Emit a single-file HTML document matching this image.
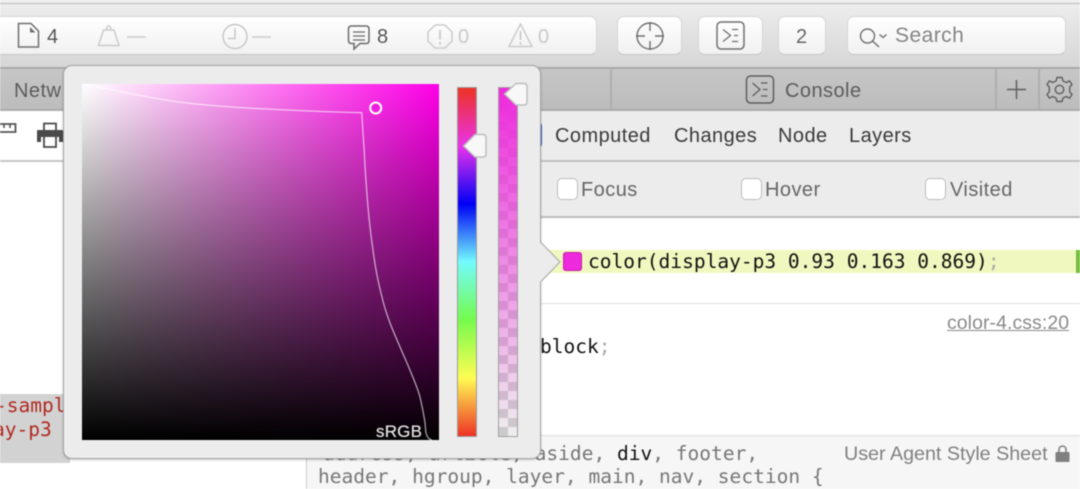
<!DOCTYPE html>
<html><head><meta charset="utf-8">
<style>
html,body{margin:0;padding:0;width:1080px;height:489px;overflow:hidden;background:#fff}
*{box-sizing:border-box}
#r{position:relative;width:1080px;height:489px;overflow:hidden;font-family:"Liberation Sans",sans-serif;filter:blur(.45px)}
.a{position:absolute}
.t{position:absolute;white-space:pre;line-height:24px;height:24px;font-size:20px;letter-spacing:.45px}
.m{position:absolute;white-space:pre;line-height:24px;height:24px;font-family:"DejaVu Sans Mono","Liberation Mono",monospace;font-size:19.55px}
.btn{position:absolute;top:16px;height:39px;border-radius:7px;border:1px solid #d6d6d6;border-bottom-color:#c6c6c6;background:linear-gradient(#fff,#f1f1f1)}
.cb{position:absolute;top:178px;width:21px;height:22px;border-radius:5px;border:1px solid #bdbdbd;background:#fff}
svg{position:absolute;overflow:visible}
</style></head><body><div id="r">

<!-- top chrome -->
<div class="a" style="left:0;top:0;width:1080px;height:4px;background:#ececec;border-bottom:1px solid #bdbdbd"></div>
<div class="a" style="left:0;top:4px;width:1080px;height:65px;background:linear-gradient(#ededed,#d6d6d6);border-bottom:2px solid #a9a9a9"></div>
<div class="btn" style="left:-10px;width:607px"></div>
<div class="btn" style="left:617px;width:65px"></div>
<div class="btn" style="left:698px;width:65px"></div>
<div class="btn" style="left:778px;width:48px"></div>
<div class="btn" style="left:847px;width:219px"></div>

<!-- toolbar icons -->
<svg style="left:0;top:0" width="1080" height="69" fill="none">
 <path d="M18.500 23.500H31L38.500 31V47H18.500Z" stroke="#6e6e6e" stroke-width="1.500"/>
 <path d="M30 27V32.500H35.500Z" fill="#6e6e6e"/>
 <path d="M98.500 45.500L103.500 30H114L119 45.500Z M106.500 30C106.500 24.500 111 24.500 111 30" stroke="#cbcbcb" stroke-width="1.500"/>
 <path d="M127 37H146" stroke="#cbcbcb" stroke-width="1.600"/>
 <circle cx="235" cy="36.500" r="12" stroke="#c8c8c8" stroke-width="1.500"/>
 <path d="M235 28V38.500H228" stroke="#c8c8c8" stroke-width="1.500"/>
 <path d="M252 37H271" stroke="#cbcbcb" stroke-width="1.600"/>
 <path d="M351.500 26H366Q369 26 369 29V40.500Q369 43.500 366 43.500H360L354 49V43.500H351.500Q348.500 43.500 348.500 40.500V29Q348.500 26 351.500 26Z" stroke="#6b6b6b" stroke-width="1.500"/>
 <path d="M353 32H365M353 36H365M353 40H365" stroke="#6b6b6b" stroke-width="1.300"/>
 <path d="M435 25H445L452 32V41L445 48H435L428 41V32Z" stroke="#cbcbcb" stroke-width="1.500"/>
 <path d="M440 30V39.500M440 42V44.500" stroke="#c4c4c4" stroke-width="1.600"/>
 <path d="M520.500 24L532 46.500H509Z" stroke="#cbcbcb" stroke-width="1.500"/>
 <path d="M520.500 31V40M520.500 42V44.500" stroke="#c4c4c4" stroke-width="1.500"/>
 <circle cx="650" cy="36" r="13" stroke="#6e6e6e" stroke-width="1.400"/>
 <path d="M650 22V31M650 41V50M636 36H645M655 36H664" stroke="#6e6e6e" stroke-width="1.400"/>
 <rect x="717" y="22" width="27" height="27" rx="4" stroke="#707070" stroke-width="1.500"/>
 <path d="M723 29.500L730.500 35.500L723 41.500M732 29.500H738M734 35.500H738M732 41.500H738" stroke="#707070" stroke-width="1.300"/>
 <circle cx="867.500" cy="36" r="7" stroke="#6f6f6f" stroke-width="1.400"/>
 <path d="M872.500 41L879 47" stroke="#6f6f6f" stroke-width="1.500"/>
 <path d="M879.500 34.500L883 37.500L886.500 34.500" stroke="#6f6f6f" stroke-width="1.400"/>
</svg>
<div class="t" style="left:47px;top:25px;color:#555">4</div>
<div class="t" style="left:377px;top:25px;color:#555">8</div>
<div class="t" style="left:458px;top:25px;color:#c9c9c9">0</div>
<div class="t" style="left:538px;top:25px;color:#c9c9c9">0</div>
<div class="t" style="left:796px;top:25px;color:#666">2</div>
<div class="t" style="left:895px;top:24px;color:#858585;font-size:21px">Search</div>

<!-- tab bar -->
<div class="a" style="left:0;top:69px;width:1080px;height:42px;background:linear-gradient(#c6c6c6,#bcbcbc);border-bottom:2px solid #acacac"></div>
<div class="a" style="left:610px;top:69px;width:2px;height:40px;background:#aeaeae"></div>
<div class="a" style="left:995px;top:69px;width:2px;height:40px;background:#aeaeae"></div>
<div class="a" style="left:1038px;top:69px;width:2px;height:40px;background:#aeaeae"></div>
<div class="t" style="left:14px;top:79px;color:#5c5c5c">Netw</div>
<div class="t" style="left:785px;top:79px;color:#5c5c5c">Console</div>
<svg style="left:0;top:69px" width="1080" height="41" fill="none">
 <rect x="746.500" y="7" width="27" height="27" rx="4" stroke="#5f5f5f" stroke-width="1.500"/>
 <path d="M752.500 14L760 20.500L752.500 27M761 14H767.500M763 20.500H767.500M761 27H767.500" stroke="#5f5f5f" stroke-width="1.300"/>
 <path d="M1016.500 11V30M1007 20.500H1026" stroke="#5f5f5f" stroke-width="1.500"/>
 <g stroke="#5f5f5f" stroke-width="1.400" stroke-linejoin="round">
  <circle cx="1059.500" cy="20.500" r="4.200"/>
  <path d="M1057 8.500H1062L1063 12L1066.500 13.500L1069.500 11.800L1072 15.500L1069.700 18.200V22.800L1072 25.500L1069.500 29.200L1066.500 27.500L1063 29L1062 32.500H1057L1056 29L1052.500 27.500L1049.500 29.200L1047 25.500L1049.300 22.800V18.200L1047 15.500L1049.500 11.800L1052.500 13.500L1056 12Z"/>
 </g>
</svg>

<!-- left panel -->
<div class="a" style="left:0;top:111px;width:306px;height:378px;background:#fff"></div>
<div class="a" style="left:0;top:160px;width:70px;height:2px;background:#c6c6c6"></div>
<svg style="left:0;top:110px" width="70" height="50" fill="none">
 <path d="M-2 14H15.500V22H-2" stroke="#555" stroke-width="1.800"/>
 <path d="M4 14V18M10 14V18" stroke="#555" stroke-width="1.600"/>
 <path d="M38 20H62Q63 20 63 21V32H59V27H41V32H37V21Q37 20 38 20Z" fill="#4a4a4a"/>
 <path d="M44 20V13.500H56V20" stroke="#4a4a4a" stroke-width="1.800"/>
 <path d="M44 27V37H56V27" stroke="#4a4a4a" stroke-width="1.800"/>
</svg>
<div class="a" style="left:0;top:394px;width:70px;height:69px;background:#d2d2d2"></div>
<div class="m" style="left:-5px;top:394px;color:#b02a20">-sampl</div>
<div class="m" style="left:-7px;top:418px;color:#b02a20">ay-p3</div>

<!-- right panel -->
<div class="a" style="left:530px;top:111px;width:550px;height:378px;background:#fff"></div>
<div class="a" style="left:530px;top:111px;width:550px;height:107px;background:#ececec;border-bottom:2px solid #bdbdbd"></div>
<div class="a" style="left:530px;top:160px;width:550px;height:2px;background:#c2c2c2"></div>
<div class="a" style="left:530px;top:122px;width:12px;height:26px;background:#2f62c4;border-radius:4px"></div>
<div class="t" style="left:555px;top:124px;color:#3a3a3a">Computed</div>
<div class="t" style="left:674px;top:124px;color:#3a3a3a">Changes</div>
<div class="t" style="left:778px;top:124px;color:#3a3a3a">Node</div>
<div class="t" style="left:849px;top:124px;color:#3a3a3a">Layers</div>
<div class="cb" style="left:557px"></div>
<div class="cb" style="left:741px"></div>
<div class="cb" style="left:925px"></div>
<div class="t" style="left:581px;top:178px;color:#666">Focus</div>
<div class="t" style="left:765px;top:178px;color:#666">Hover</div>
<div class="t" style="left:950px;top:178px;color:#666">Visited</div>

<div class="a" style="left:540px;top:250px;width:540px;height:23px;background:#f1f8bf"></div>
<div class="a" style="left:1076px;top:250px;width:4px;height:23px;background:#72bf3c"></div>
<div class="a" style="left:563px;top:252px;width:19px;height:19px;border-radius:3px;background:#ee2add;box-shadow:inset 0 0 0 1px rgba(160,20,130,.55)"></div>
<div class="m" style="left:588px;top:250px;color:#111">color(display-p3 0.93 0.163 0.869)<span style="color:#a8a8a8">;</span></div>
<div class="a" style="left:540px;top:303px;width:540px;height:1px;background:#dedede"></div>
<div class="t" style="left:947px;top:311px;color:#8a8a8a;font-size:19.400px;letter-spacing:.1px;text-decoration:underline">color-4.css:20</div>
<div class="m" style="left:540px;top:335px;color:#111">block<span style="color:#a8a8a8">;</span></div>

<!-- bottom UA rule -->
<div class="a" style="left:306px;top:435px;width:774px;height:54px;background:#f6f6f6;border-top:1px solid #dcdcdc;border-left:1px solid #cfcfcf"></div>
<div class="m" style="left:323px;top:442px;color:#777;">address, article, aside, <span style="color:#111">div</span>, footer,</div>
<div class="m" style="left:318px;top:465px;color:#777;">header, hgroup, layer, main, nav, section {</div>
<div class="t" style="left:844px;top:442px;color:#808080;font-size:19.700px;letter-spacing:0">User Agent Style Sheet</div>
<svg style="left:1055px;top:445px" width="16" height="18" fill="none">
 <rect x="0.500" y="7" width="14" height="10" rx="1" fill="#808080"/>
 <path d="M4 7V4.500C4 0 11 0 11 4.500V7" stroke="#808080" stroke-width="1.600"/>
</svg>

<!-- popover -->
<div class="a" style="left:63px;top:65px;width:478px;height:394px;background:#ececec;border:1px solid #a4a4a4;border-radius:9px;box-shadow:0 1px 2px rgba(0,0,0,.22)"></div>
<svg style="left:0;top:0" width="1080" height="489">
 <path d="M539 243H540.500L560 262L540.500 282H539Z" fill="#ececec"/>
 <path d="M540.500 242L560 262L540.500 282" fill="none" stroke="#b5b5b5" stroke-width="1.300"/>
</svg>
<div class="a" style="left:82px;top:84px;width:357px;height:356px;background:linear-gradient(to bottom,rgba(0,0,0,0),#000),linear-gradient(to right,#fff,#ff00e8)"></div>
<svg style="left:82px;top:84px" width="357" height="356" fill="none">
 <path d="M2 0C30 6 62 13 96 18C130 22 160 24 186 25C220 27 250 28 279.700 28.700C280.500 40 281 50 282 63C283 85 284.500 105 286 123C287.500 140 289 153 291 166C293 182 296 198 300 213C302 222 305 231 308 239C313 252 319 265 325 279C330 291 335 302 338 313C340 322 342 331 343 339C343.500 343 343.500 346 344 349C345 353 347 355.500 350 356" stroke="#fff" stroke-opacity=".62" stroke-width="1.300"/>
 <circle cx="293.700" cy="24" r="5.500" stroke="#fff" stroke-width="2" fill="#ed1fdc"/>
</svg>
<div class="t" style="left:376px;top:420px;color:#e2e2e2;font-size:17px;letter-spacing:.2px;text-shadow:0 0 .6px #e2e2e2">sRGB</div>

<div class="a" style="left:457px;top:87px;width:20px;height:350px;border:1px solid #9c9c9c;background:linear-gradient(to bottom,#ee3224 0%,#ea33ea 16.67%,#0000f5 33.33%,#73fbfd 50%,#75fb4c 66.67%,#fffd54 83.33%,#ee3224 100%)"></div>
<div class="a" style="left:498px;top:87px;width:20px;height:350px;border:1px solid #a0a0a0;background:linear-gradient(to bottom,rgba(238,42,221,1),rgba(238,42,221,0)),repeating-conic-gradient(#cccccc 0 25%,#eeeeee 0 50%) 0 100%/18px 18px"></div>
<svg style="left:0;top:0" width="1080" height="489" fill="none">
 <path d="M463.500 146L475 134.500H483Q486 134.500 486 137.500V154Q486 157 483 157H475Z" fill="#f8f8f8" stroke="#bdbdbd" stroke-width="1.400"/>
 <path d="M504.500 94L516 83.500H524Q527 83.500 527 86.500V102Q527 105 524 105H516Z" fill="#f8f8f8" stroke="#bdbdbd" stroke-width="1.400"/>
</svg>

</div></body></html>
